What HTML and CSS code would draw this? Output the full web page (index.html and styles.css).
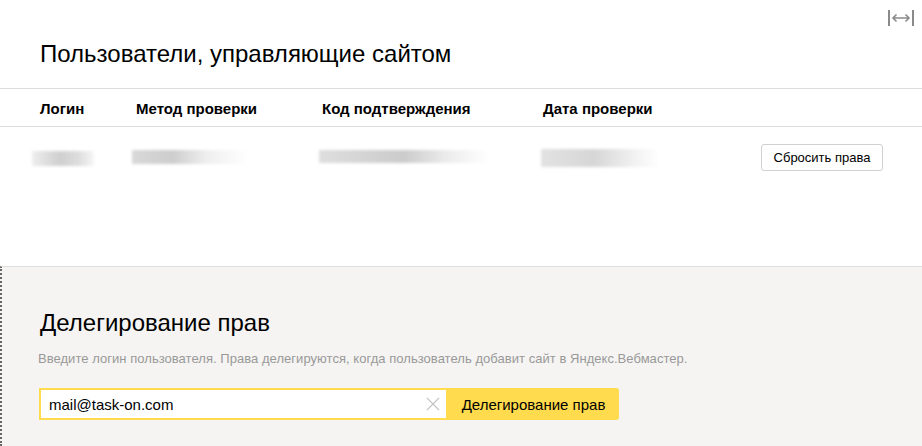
FILE: index.html
```html
<!DOCTYPE html>
<html lang="ru">
<head>
<meta charset="utf-8">
<title>Пользователи</title>
<link rel="stylesheet" href="styles.css">
</head>
<body>
<div class="page">
  <section class="users">
    <button class="expand" aria-label="Развернуть">
      <svg width="28" height="18" viewBox="0 0 28 18">
        <path d="M2 1v16M26 1v16" stroke="#8a8a8a" stroke-width="2" fill="none"/>
        <path d="M6 9h16M9.5 5.5 6 9l3.5 3.5M18.5 5.5 22 9l-3.5 3.5" stroke="#8a8a8a" stroke-width="1.6" fill="none"/>
      </svg>
    </button>
    <h1 class="title">Пользователи, управляющие сайтом</h1>
    <div class="table">
      <div class="row head">
        <div class="c1">Логин</div>
        <div class="c2">Метод проверки</div>
        <div class="c3">Код подтверждения</div>
        <div class="c4">Дата проверки</div>
        <div class="c5"></div>
      </div>
      <div class="row body">
        <div class="c1"><span class="blur b-login"></span></div>
        <div class="c2"><span class="blur b-method"></span></div>
        <div class="c3"><span class="blur b-code"></span></div>
        <div class="c4"><span class="blur b-date"></span></div>
        <div class="c5"><button class="reset">Сбросить права</button></div>
      </div>
    </div>
  </section>
  <section class="delegate">
    <h2 class="title">Делегирование прав</h2>
    <p class="hint">Введите логин пользователя. Права делегируются, когда пользователь добавит сайт в Яндекс.Вебмастер.</p>
    <div class="form">
      <div class="input">
        <span class="value">mail@task-on.com</span>
        <svg class="clear" width="14" height="14" viewBox="0 0 14 14"><path d="M1 1l12 12M13 1 1 13" stroke="#c4c4c4" stroke-width="1.2" fill="none"/></svg>
      </div>
      <button class="submit">Делегирование прав</button>
    </div>
  </section>
</div>
</body>
</html>
```
FILE: styles.css
```css
* { box-sizing: border-box; }
html, body { margin: 0; padding: 0; }
body {
  font-family: Arial, "Liberation Sans", sans-serif;
  color: #000;
  background: #fff;
  width: 922px;
  height: 446px;
  overflow: hidden;
}
.page { display: flex; flex-direction: column; height: 446px; }
.users { position: relative; height: 266px; }
.expand {
  position: absolute; right: 7px; top: 9px;
  border: 0; background: none; padding: 0; width: 28px; height: 18px;
}
.expand svg { display: block; }
.title {
  margin: 0;
  font-weight: normal;
  font-size: 24px;
  line-height: 28px;
}
.users .title { padding: 40px 0 0 40px; height: 88px; }
.table { border-top: 1px solid #dcdcdc; }
.row { display: flex; padding-left: 40px; }
.row .c1 { width: 96px; }
.row .c2 { width: 186px; }
.row .c3 { width: 221px; }
.row .c4 { width: 218px; }
.row .c5 { flex: 1; }
.head {
  height: 38px; align-items: center;
  font-weight: bold; font-size: 15px;
  border-bottom: 1px solid #dcdcdc;
  padding-top: 1px;
}
.body { padding-top: 17px; align-items: flex-start; }
.blur {
  display: block; height: 15px;
  filter: blur(1.5px);
}
.b-login { width: 62px; margin: 7px 0 0 -8px; background: linear-gradient(90deg, #eee, #cfcfcf 45%, #ddd 75%, #f6f6f6); }
.b-method { width: 116px; margin: 6px 0 0 -4px; height: 14px; background: linear-gradient(90deg, #d8d8d8, #cdcdcd 35%, #efefef 65%, #fff); }
.b-code { width: 170px; margin: 6px 0 0 -3px; height: 13px; background: linear-gradient(90deg, #dedede, #cbcbcb 50%, #ececec 75%, #fff); }
.b-date { width: 118px; margin: 5px 0 0 -2px; height: 18px; background: linear-gradient(90deg, #e2e2e2, #d6d6d6 45%, #f2f2f2 80%, #fff); }
.c5 { display: flex; justify-content: flex-end; padding-right: 39px; }
.reset {
  width: 122px; height: 27px;
  border: 1px solid #d0d0d0; border-radius: 3px;
  background: #fff;
  font-family: Arial, "Liberation Sans", sans-serif;
  font-size: 13px; color: #000;
  padding: 0;
}
.delegate {
  flex: 1;
  background: #f5f4f2;
  border-top: 1px solid #dedede;
  border-left: 2px dotted #666;
  padding: 42px 0 0 37px;
}
.delegate .title { padding-left: 1px; }
.hint {
  margin: 14px 0 0 -1px;
  font-size: 13px; color: #999;
  line-height: 16px;
  letter-spacing: 0.04px;
}
.form { display: flex; margin-top: 21px; height: 32px; }
.input {
  width: 409px; height: 32px;
  border: 2px solid #ffdb4d;
  background: #fff;
  display: flex; align-items: center;
  padding: 0 6px 0 8px;
}
.value { flex: 1; font-size: 15px; }
.clear { display: block; }
.submit {
  width: 171px; height: 32px;
  border: 0; border-radius: 0 3px 3px 0;
  background: #ffdb4d;
  font-family: Arial, "Liberation Sans", sans-serif;
  font-size: 15px; color: #000; padding: 0;
}
```
